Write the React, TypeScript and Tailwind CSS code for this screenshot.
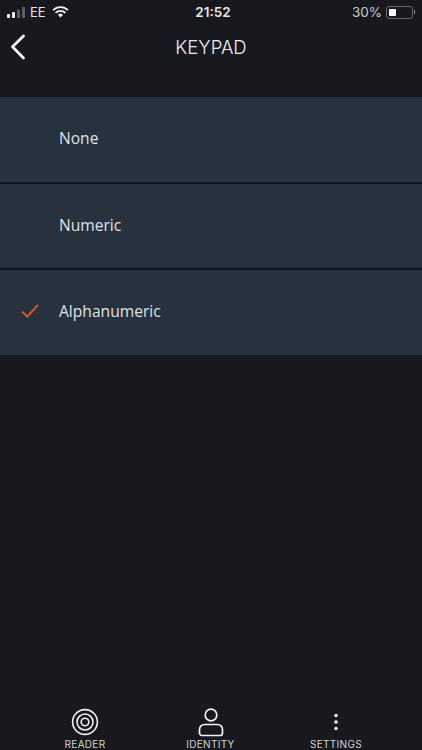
const options = ["None", "Numeric", "Alphanumeric"];

const StatusBar = () => (
  <div className="flex h-[24px] items-center justify-between pl-[7px] pr-[7px] font-['Inter',sans-serif] text-[#e4e5e7]">
    <div className="flex flex-1 items-center">
      <svg width="19" height="11" viewBox="0 0 19 11" className="mr-[4px]">
        <rect x="0" y="7" width="3" height="4" rx="0.7" fill="#f0f0f0" />
        <rect x="5" y="5" width="3" height="6" rx="0.7" fill="#f0f0f0" />
        <rect x="10" y="2.5" width="3" height="8.5" rx="0.7" fill="#5b5d62" />
        <rect x="15" y="0" width="3" height="11" rx="0.7" fill="#5b5d62" />
      </svg>
      <span className="text-[13px] leading-none">EE</span>
      <svg width="17" height="12" viewBox="0 0 17 12" className="ml-[6px]" fill="none" stroke="#f0f0f0" strokeWidth="1.9">
        <path d="M1 4.2a10.6 10.6 0 0 1 15 0" />
        <path d="M3.6 6.9a7 7 0 0 1 9.8 0" />
        <path d="M8.5 11.4 6 8.9a3.5 3.5 0 0 1 5 0z" fill="#f0f0f0" stroke="none" />
      </svg>
    </div>
    <span className="ml-[4px] mt-[2px] text-[13.5px] font-semibold leading-none">21:52</span>
    <div className="flex flex-1 items-center justify-end">
      <span className="mr-[4px] mt-[2px] text-[13.5px] leading-none text-[#c9cacc]">30%</span>
      <div className="flex h-[13px] w-[27px] items-center rounded-[3px] border border-[#66686c] p-[2px]">
        <div className="h-full w-[7px] rounded-[1px] bg-white" />
      </div>
      <div className="ml-[1px] h-[4px] w-[1px] bg-[#8b8c90]" />
    </div>
  </div>
);

const Header = () => (
  <div className="relative flex h-[49px] items-center justify-center pb-[2px]">
    <svg width="16" height="26" viewBox="0 0 16 26" className="absolute left-[10px] top-[10px]" fill="none" stroke="#f2f2f2" strokeWidth="2.8" strokeLinecap="round" strokeLinejoin="round">
      <path d="M13.5 2 2.5 12.8 13.5 24" />
    </svg>
    <span className="font-['Inter',sans-serif] text-[18.5px] font-light text-[#eeeeef]">KEYPAD</span>
  </div>
);

const OptionRow = ({ label, selected }: { label: string; selected?: boolean }) => (
  <div className="flex h-[84.5px] items-center bg-[#28323e] pb-[1px] pl-[21px]">
    <div className="w-[38px]">
      {selected && (
        <svg width="18" height="14" viewBox="0 0 18 14" fill="none" stroke="#d9552a" strokeWidth="2" className="-mt-[2px]">
          <path d="M1 7.5 6.3 12.5 17 1" />
        </svg>
      )}
    </div>
    <span className="font-['Open_Sans',sans-serif] text-[15.6px] text-[#dfe2e6]">{label}</span>
  </div>
);

const TabItem = ({ label, children }: { label: string; children: React.ReactNode }) => (
  <div className="flex w-[80px] flex-col items-center">
    <div className="flex h-[30px] items-center justify-center">{children}</div>
    <span className="mt-[1px] font-['Inter',sans-serif] text-[10px] leading-[12px] tracking-[0.3px] text-[#d2d3d5]">{label}</span>
  </div>
);

const App = () => {
  return (
    <div className="flex h-[750px] w-full flex-col overflow-hidden bg-[#18191e]">
      <StatusBar />
      <Header />
      <div className="mt-[24px] flex flex-col gap-[2px] bg-[#13161b]">
        {options.map((o) => (
          <OptionRow key={o} label={o} selected={o === "Alphanumeric"} />
        ))}
      </div>
      <div className="mt-auto flex justify-between pl-[45px] pr-[46px]">
        <TabItem label="READER">
          <svg width="28" height="28" viewBox="0 0 28 28" fill="none" stroke="#f2f2f2" strokeWidth="1.6">
            <circle cx="14" cy="14" r="12.4" />
            <circle cx="14" cy="14" r="8" />
            <circle cx="14" cy="14" r="3.8" />
          </svg>
        </TabItem>
        <TabItem label="IDENTITY">
          <svg width="26" height="29" viewBox="0 0 26 29" fill="none" stroke="#f2f2f2" strokeWidth="1.7">
            <circle cx="13" cy="7" r="5.8" />
            <path d="M6.5 16.5h13a5 5 0 0 1 5 5v3.5a2.5 2.5 0 0 1-2.5 2.5H4A2.5 2.5 0 0 1 1.5 25v-3.5a5 5 0 0 1 5-5z" />
          </svg>
        </TabItem>
        <TabItem label="SETTINGS">
          <svg width="6" height="18" viewBox="0 0 6 18" fill="#f2f2f2">
            <circle cx="3" cy="2.5" r="1.8" />
            <circle cx="3" cy="9" r="1.8" />
            <circle cx="3" cy="15.5" r="1.8" />
          </svg>
        </TabItem>
      </div>
    </div>
  );
};

export default App;
